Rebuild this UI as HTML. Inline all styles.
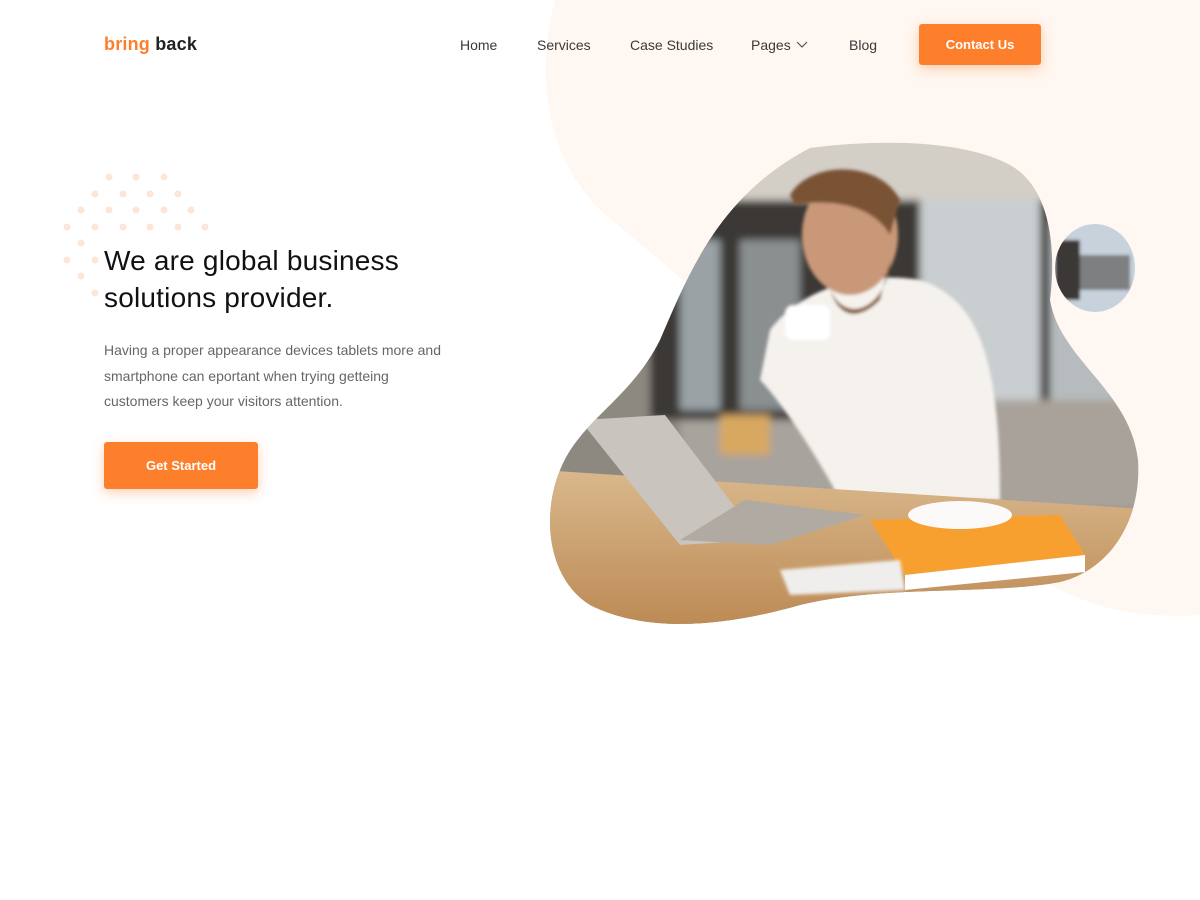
<!DOCTYPE html>
<html><head><meta charset="utf-8"><style>
*{margin:0;padding:0;box-sizing:border-box}
body{width:1200px;height:900px;background:#fff;font-family:"Liberation Sans",sans-serif;position:relative;overflow:hidden}
.abs{position:absolute}
.logo{left:104px;top:34px;font-size:18px;font-weight:bold;letter-spacing:0.2px}
.nav a{position:absolute;top:37px;font-size:14px;color:#3a3a3a;text-decoration:none}
.btn{background:#fd7f2c;color:#fff;font-size:13px;font-weight:bold;display:flex;align-items:center;justify-content:center;border-radius:3px;box-shadow:0 4px 12px rgba(253,127,44,.35)}
h1{left:104px;top:242px;font-size:28px;font-weight:normal;line-height:37px;color:#111;letter-spacing:0.2px}
p{left:104px;top:338px;font-size:14px;line-height:25.5px;color:#666}
</style></head><body>
<svg class="abs" style="left:0;top:0" width="1200" height="900">
<defs>
<clipPath id="c"><path d="M810 148 C870 140 960 138 1010 165 C1055 190 1055 260 1050 300 C1060 360 1130 390 1138 460 C1142 520 1110 570 1060 582 C990 595 880 585 800 605 C730 625 650 635 590 605 C550 580 540 520 560 470 C580 420 630 400 660 340 C690 270 720 195 810 148 Z"/></clipPath>
<clipPath id="c2"><ellipse cx="1095" cy="268" rx="40" ry="44"/></clipPath>
<linearGradient id="wood" x1="0" y1="0" x2="0" y2="1"><stop offset="0" stop-color="#d9b88c"/><stop offset="1" stop-color="#b8834c"/></linearGradient>
<filter id="b"><feGaussianBlur stdDeviation="4"/></filter>
<filter id="b2"><feGaussianBlur stdDeviation="1.5"/></filter>
</defs>
<path fill="#fff7f1" d="M555 0 L1200 0 L1200 615 C1120 620 1080 600 1040 580 L600 210 C560 170 530 100 555 0 Z"/>
<g clip-path="url(#c)">
<g filter="url(#b)">
<rect x="520" y="120" width="660" height="540" fill="#8d8880"/>
<rect x="520" y="120" width="660" height="85" fill="#d3cec6"/>
<rect x="650" y="200" width="500" height="220" fill="#3b3835"/>
<rect x="680" y="240" width="40" height="170" fill="#9aa2a6"/>
<rect x="740" y="240" width="60" height="170" fill="#8a8f90"/>
<rect x="920" y="200" width="120" height="200" fill="#c9ced0"/>
<rect x="1050" y="220" width="100" height="180" fill="#b6bcbd"/>
<rect x="990" y="400" width="160" height="110" fill="#a9a29a"/>
<rect x="680" y="420" width="160" height="80" fill="#a8a39d"/>
<rect x="720" y="415" width="50" height="40" fill="#d8a860"/>
</g>
<g filter="url(#b2)">
<path fill="#f5f2ee" d="M770 330 C800 290 860 270 920 280 C980 300 1000 360 1000 500 L840 500 C820 460 780 400 760 380 Z"/>
<ellipse cx="850" cy="235" rx="48" ry="60" fill="#c99878"/>
<path fill="#7a5234" d="M790 195 C810 160 880 160 900 200 L890 235 C870 200 820 200 795 205 Z"/>
<path fill="#8a5e3d" d="M830 290 C850 330 890 300 890 260 L880 300 C860 320 840 320 830 290Z"/>
<rect x="785" y="305" width="45" height="35" rx="8" fill="#fff"/>
</g>
<path fill="url(#wood)" d="M540 470 L1160 510 L1160 650 L540 650 Z"/>
<path fill="#c9c4bd" d="M580 420 L665 415 L760 540 L680 545 Z"/>
<path fill="#b0aaa2" d="M680 540 L770 545 L865 515 L745 500 Z"/>
<path fill="#f7a030" d="M870 520 L1060 515 L1085 555 L905 575 Z"/>
<path fill="#fff" d="M905 575 L1085 555 L1085 572 L905 590 Z"/>
<ellipse cx="960" cy="515" rx="52" ry="14" fill="#fbfaf8"/>
<path fill="#efeeec" filter="url(#b2)" d="M780 570 L900 560 L905 590 L790 595 Z"/>
</g>
<g clip-path="url(#c2)" filter="url(#b2)">
<rect x="1050" y="220" width="90" height="100" fill="#c7d2dd"/>
<rect x="1055" y="240" width="25" height="60" fill="#3b3835"/>
<rect x="1080" y="255" width="50" height="35" fill="#7d7f80"/>
</g>
<g fill="#fde6d6">
<circle cx="109" cy="177" r="3.5"/><circle cx="136" cy="177" r="3.5"/><circle cx="164" cy="177" r="3.5"/>
<circle cx="95" cy="194" r="3.5"/><circle cx="123" cy="194" r="3.5"/><circle cx="150" cy="194" r="3.5"/><circle cx="178" cy="194" r="3.5"/>
<circle cx="81" cy="210" r="3.5"/><circle cx="109" cy="210" r="3.5"/><circle cx="136" cy="210" r="3.5"/><circle cx="164" cy="210" r="3.5"/><circle cx="191" cy="210" r="3.5"/>
<circle cx="67" cy="227" r="3.5"/><circle cx="95" cy="227" r="3.5"/><circle cx="123" cy="227" r="3.5"/><circle cx="150" cy="227" r="3.5"/><circle cx="178" cy="227" r="3.5"/><circle cx="205" cy="227" r="3.5"/>
<circle cx="81" cy="243" r="3.5"/><circle cx="67" cy="260" r="3.5"/><circle cx="81" cy="276" r="3.5"/><circle cx="95" cy="293" r="3.5"/><circle cx="95" cy="260" r="3.5"/>
</g>
<path d="M797 42 L802 47 L807 42" fill="none" stroke="#555" stroke-width="1.2"/>
</svg>
<div class="abs logo"><span style="color:#fd7f2c">bring</span> <span style="color:#222">back</span></div>
<div class="nav">
<a style="left:460px">Home</a><a style="left:537px">Services</a><a style="left:630px">Case Studies</a><a style="left:751px">Pages</a><a style="left:849px">Blog</a>
</div>
<div class="abs btn" style="left:919px;top:24px;width:122px;height:41px">Contact Us</div>
<h1 class="abs">We are global business<br>solutions provider.</h1>
<p class="abs">Having a proper appearance devices tablets more and<br>smartphone can eportant when trying getteing<br>customers keep your visitors attention.</p>
<div class="abs btn" style="left:104px;top:442px;width:154px;height:47px">Get Started</div>
</body></html>
